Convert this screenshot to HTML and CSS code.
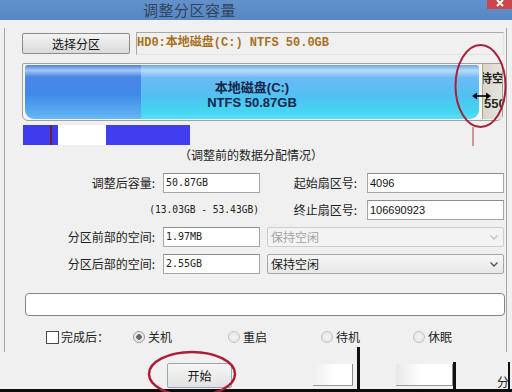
FILE: index.html
```html
<!DOCTYPE html>
<html>
<head>
<meta charset="utf-8">
<link rel="stylesheet" href="styles.css">
</head>
<body>
<div class="titlebar">
  <span class="title">调整分区容量</span>
  <span class="close"><svg width="25" height="9" viewBox="0 0 25 9"><path d="M10 0 L16 6 M16 0 L10 6" stroke="#fff" stroke-width="2"/></svg></span>
</div>
<div class="panel">
  <div class="row-top">
    <div class="btn btn-select">选择分区</div>
    <div class="disk-field">HD0:本地磁盘(C:) NTFS 50.0GB</div>
  </div>
  <div class="bar-frame">
    <div class="bar-used">
      <div class="bar-label">本地磁盘(C:)</div>
      <div class="bar-label">NTFS 50.87GB</div>
    </div>
    <div class="bar-unalloc">
      <div class="ua-line">待空闲</div>
      <div class="ua-line ua-size">550</div>
    </div>
  </div>
  <div class="strip">
    <span class="sb sb-a"></span><span class="sb sb-red"></span><span class="sb sb-b"></span><span class="sb sb-white"></span><span class="sb sb-c"></span>
  </div>
  <div class="caption">（调整前的数据分配情况）</div>
  <div class="form">
    <div class="frow">
      <span class="lbl lbl-left">调整后容量:</span>
      <span class="inp inp-left">50.87GB</span>
      <span class="lbl lbl-right">起始扇区号:</span>
      <span class="inp inp-right">4096</span>
    </div>
    <div class="frow">
      <span class="range">(13.03GB - 53.43GB)</span>
      <span class="lbl lbl-right">终止扇区号:</span>
      <span class="inp inp-right">106690923</span>
    </div>
    <div class="frow">
      <span class="lbl lbl-left">分区前部的空间:</span>
      <span class="inp inp-left">1.97MB</span>
      <span class="sel sel-disabled">保持空闲<svg class="chev" width="8" height="5" viewBox="0 0 8 5"><path d="M0.5 0.5 L4 4 L7.5 0.5" fill="none" stroke="#c4c4c4" stroke-width="1.4"/></svg></span>
    </div>
    <div class="frow">
      <span class="lbl lbl-left">分区后部的空间:</span>
      <span class="inp inp-left">2.55GB</span>
      <span class="sel">保持空闲<svg class="chev" width="8" height="5" viewBox="0 0 8 5"><path d="M0.5 0.5 L4 4 L7.5 0.5" fill="none" stroke="#555" stroke-width="1.4"/></svg></span>
    </div>
  </div>
  <div class="progress"></div>
  <div class="opts">
    <div class="opt opt-check"><span class="checkbox"></span><span>完成后：</span></div>
    <div class="opt opt-w1"><span class="radio radio-on"></span><span>关机</span></div>
    <div class="opt opt-w2"><span class="radio"></span><span>重启</span></div>
    <div class="opt opt-w3"><span class="radio"></span><span>待机</span></div>
    <div class="opt"><span class="radio"></span><span>休眠</span></div>
  </div>
</div>
<div class="bottom">
  <div class="btn btn-start">开始</div>
  <div class="ghost ghost-a"></div>
  <div class="vline vline-a"></div>
  <div class="ghost ghost-b"></div>
  <div class="vline vline-b"></div>
  <div class="cut-text">分</div>
  <div class="vline vline-c"></div>
</div>
<div class="blackbar"></div>
<svg class="annot" width="512" height="392" viewBox="0 0 512 392">
  <ellipse cx="480.5" cy="86" rx="25" ry="41" fill="none" stroke="#a8203a" stroke-width="2"/>
  <path d="M473 127 L473 146" stroke="#b03848" stroke-width="1"/>
  <path d="M476 96 L488 96" stroke="#000" stroke-width="1.6"/>
  <path d="M472 96 L477 92.5 L477 99.5 Z" fill="#000"/>
  <path d="M491 96 L486 92.5 L486 99.5 Z" fill="#000"/>
  <ellipse cx="192" cy="374" rx="43" ry="22" fill="none" stroke="#b01c36" stroke-width="2.5"/>
</svg>
</body>
</html>
```

FILE: styles.css
```css
* { box-sizing: border-box; margin: 0; padding: 0; }
html, body { width: 512px; height: 392px; overflow: hidden; }
body {
  background: #f0f0f0;
  font-family: "Noto Sans CJK SC", "Liberation Sans", sans-serif;
  font-size: 12px;
  color: #1e1e1e;
  position: relative;
}
.titlebar {
  height: 20px;
  background: linear-gradient(#6391cb, #5788c3);
  display: flex;
  align-items: flex-start;
}
.title {
  padding-left: 143px;
  font-size: 15px;
  line-height: 20px;
  letter-spacing: 0.5px;
  color: #33435a;
}
.close {
  margin-left: auto;
  width: 25px;
  height: 9px;
  background: #c9474a;
  display: block;
}
.close svg { display: block; }
.panel {
  margin: 8px 0 0 4px;
  width: 503px;
  height: 324px;
  border-left: 1px solid #a5a5a5;
  border-right: 1px solid #a5a5a5;
  display: flex;
  flex-direction: column;
}
.row-top {
  margin-top: 4px;
  height: 23px;
  display: flex;
  align-items: flex-start;
}
.btn {
  border: 1px solid #8c8c8c;
  border-radius: 2px;
  background: linear-gradient(#f4f4f4, #e6e6e6 50%, #dadada);
  display: flex;
  align-items: center;
  justify-content: center;
  font-size: 12px;
  line-height: 14px;
  color: #111;
}
.btn-select {
  margin-left: 17px;
  margin-top: 1px;
  width: 108px;
  height: 21px;
}
.disk-field {
  margin-left: 6px;
  width: 368px;
  height: 23px;
  border: 1px solid #a8a8a8;
  border-right-color: #e4e4e4;
  border-bottom-color: #e4e4e4;
  font-family: "Liberation Mono", "Noto Sans CJK SC", monospace;
  font-weight: bold;
  font-size: 12px;
  line-height: 21px;
  color: #a8701e;
  white-space: nowrap;
}
.bar-frame {
  margin-top: 8px;
  margin-left: 17px;
  width: 481px;
  height: 58px;
  border: 1px solid #a0a0a0;
  border-radius: 2px 2px 6px 6px;
  padding: 1px 0 1px 2px;
  display: flex;
  background: #f4f6f6;
}
.bar-used {
  width: 454px;
  height: 54px;
  border-radius: 3px 3px 9px 9px;
  background:
    linear-gradient(#4a7fe4 0%, #a8c6f4 10%, #4a86e8 22%, #3f8ae9 55%, #56aaf0 85%, #6ab8f2 100%) left top / 116px 100% no-repeat,
    linear-gradient(#6aa4ec 0%, #b8dcf8 10%, #6cbaf4 24%, #4fc2f2 60%, #46d6f2 88%, #58e0f4 100%);
  display: flex;
  flex-direction: column;
  align-items: center;
  justify-content: center;
  padding-top: 6px;
}
.bar-label {
  font-family: "Liberation Sans", "Noto Sans CJK SC", sans-serif;
  font-weight: bold;
  font-size: 13px;
  line-height: 15px;
  color: #14264a;
}
.bar-unalloc {
  margin-left: 3px;
  width: 20px;
  height: 55px;
  margin-top: -1px;
  border-left: 1px solid #c2aa62;
  background: linear-gradient(90deg, #d8d6cc, #e6e4dc);
  overflow: hidden;
  display: flex;
  flex-direction: column;
}
.ua-line {
  margin-left: -3px;
  white-space: nowrap;
  font-weight: bold;
  font-size: 12px;
  line-height: 14px;
  color: #222;
}
.ua-line:first-child { margin-top: 7px; }
.ua-size {
  margin-top: 12px;
  margin-left: 1px;
  font-family: "Liberation Sans", sans-serif;
  font-size: 13px;
  color: #2a2a2a;
}
.strip {
  margin-top: 4px;
  margin-left: 18px;
  height: 20px;
  display: flex;
}
.sb { display: block; height: 20px; }
.sb-a { width: 27px; background: #3d3cec; }
.sb-red { width: 2px; background: #7a1838; }
.sb-b { width: 6px; background: #3d3cec; }
.sb-white { width: 48px; background: #ffffff; }
.sb-c { width: 84px; background: #3f3ff0; }
.caption {
  margin-top: 3px;
  height: 14px;
  line-height: 14px;
  padding-left: 174px;
  font-size: 12px;
  color: #222;
  white-space: nowrap;
}
.form {
  margin-top: 11px;
  display: flex;
  flex-direction: column;
  gap: 7px;
}
.frow {
  height: 20px;
  display: flex;
  align-items: center;
}
.lbl {
  font-size: 12px;
  line-height: 20px;
  text-align: right;
  white-space: nowrap;
  color: #222;
}
.lbl-left { width: 150px; }
.lbl-right { width: 97px; }
.inp {
  height: 20px;
  background: #fff;
  border: 1px solid #a6a6a6;
  border-top-color: #8c8c8c;
  padding-left: 2px;
  white-space: nowrap;
}
.inp-left {
  margin-left: 8px;
  width: 97px;
  font-family: "DejaVu Sans Mono", monospace;
  font-size: 10px;
  line-height: 18px;
  color: #222;
}
.inp-right {
  margin-left: 10px;
  width: 137px;
  font-family: "Liberation Sans", sans-serif;
  font-size: 11px;
  line-height: 18px;
  color: #111;
}
.range {
  width: 255px;
  text-align: right;
  padding-right: 1px;
  font-family: "DejaVu Sans Mono", monospace;
  font-size: 9.6px;
  line-height: 20px;
  color: #222;
  white-space: nowrap;
}
.sel {
  margin-left: 7px;
  width: 237px;
  height: 20px;
  border: 1px solid #a6a6a6;
  border-radius: 2px;
  background: linear-gradient(#f6f6f6, #e8e8e8);
  display: flex;
  align-items: center;
  padding-left: 3px;
  font-size: 12px;
  line-height: 18px;
  color: #1a1a1a;
}
.sel-disabled {
  background: #f3f3f3;
  border-color: #cdcdcd;
  color: #a2a2a2;
}
.chev { margin-left: auto; margin-right: 5px; display: block; }
.progress {
  margin-top: 19px;
  margin-left: 20px;
  width: 480px;
  height: 23px;
  background: #fff;
  border: 1px solid #858585;
  border-radius: 4px;
}
.opts {
  margin-top: 15px;
  height: 12px;
  display: flex;
  align-items: center;
  padding-left: 41px;
}
.opt {
  display: flex;
  align-items: center;
  gap: 3px;
  font-size: 12px;
  line-height: 12px;
  color: #222;
  white-space: nowrap;
}
.opt-check { width: 87px; gap: 2px; }
.opt-w1 { width: 95px; }
.opt-w2 { width: 93px; }
.opt-w3 { width: 92px; }
.checkbox {
  width: 13px;
  height: 13px;
  background: #fff;
  border: 1px solid #4a4a4a;
  display: block;
}
.radio {
  width: 12px;
  height: 12px;
  border-radius: 50%;
  border: 1px solid #c2c2c2;
  background: radial-gradient(circle, #f4f4f4, #e2e2e2);
  display: block;
}
.radio-on {
  border-color: #9a9a9a;
  background: radial-gradient(circle, #6a6a6a 0, #6a6a6a 2.5px, #e4e4e4 3px, #f2f2f2 100%);
}
.bottom {
  height: 37px;
  display: flex;
  align-items: flex-end;
}
.btn-start {
  margin-left: 167px;
  margin-bottom: 1px;
  width: 65px;
  height: 25px;
  border-color: #9aa6b4;
  background: linear-gradient(#f6f6f6, #e2e2e2);
}
.ghost {
  height: 22px;
  margin-bottom: 3px;
  border-right: 1px solid #8a8a8a;
  border-bottom: 1px solid #9a9a9a;
}
.ghost-a {
  margin-left: 81px;
  width: 40px;
  background: linear-gradient(90deg, #eeeeee, #ffffff 55%);
}
.ghost-b {
  margin-left: 36px;
  width: 57px;
  background: linear-gradient(90deg, #e8e8e8, #ffffff 45%);
}
.vline { background: #111; }
.vline-a { margin-left: 4px; width: 3px; height: 42px; }
.vline-b { width: 3px; height: 27px; }
.cut-text {
  margin-left: 41px;
  width: 11px;
  overflow: hidden;
  font-size: 12px;
  line-height: 14px;
  color: #222;
}
.vline-c { width: 2px; height: 27px; }
.blackbar { height: 3px; background: #0c0c0c; }
.annot {
  position: absolute;
  left: 0;
  top: 0;
  pointer-events: none;
}
```
